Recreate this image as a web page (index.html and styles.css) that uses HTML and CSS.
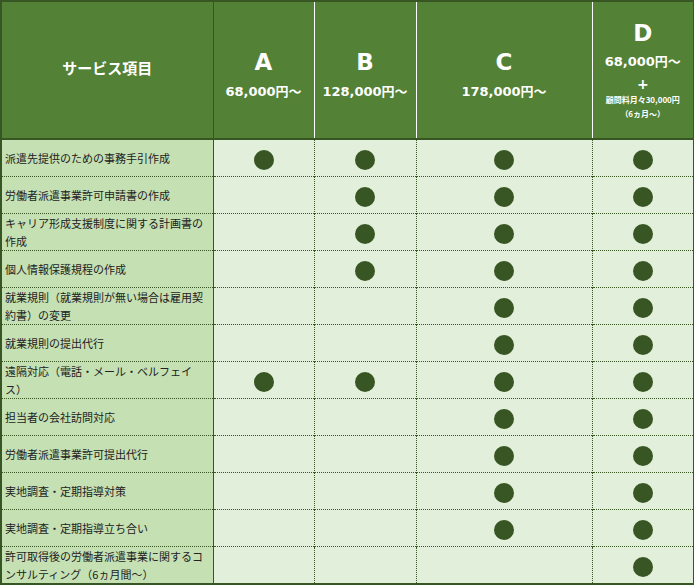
FILE: index.html
```html
<!DOCTYPE html>
<html lang="ja">
<head>
<meta charset="utf-8">
<title>サービス項目</title>
<link rel="stylesheet" href="styles.css">
</head>
<body>
<table class="grid">
  <colgroup>
    <col class="c-item"><col class="c-a"><col class="c-b"><col class="c-c"><col class="c-d">
  </colgroup>
  <thead>
    <tr>
      <th class="h-item"><span class="h-label">サービス項目</span></th>
      <th><div class="plan"><span class="letter">A</span><span class="price">68,000円～</span></div></th>
      <th><div class="plan"><span class="letter">B</span><span class="price">128,000円～</span></div></th>
      <th><div class="plan"><span class="letter">C</span><span class="price">178,000円～</span></div></th>
      <th><div class="plan plan-d"><span class="letter">D</span><span class="price">68,000円～</span><span class="plus">+</span><span class="small">顧問料月々30,000円</span><span class="small">（6ヵ月～）</span></div></th>
    </tr>
  </thead>
  <tbody>
    <tr><td class="item">派遣先提供のための事務手引作成</td><td><span class="dot"></span></td><td><span class="dot"></span></td><td><span class="dot"></span></td><td><span class="dot"></span></td></tr>
    <tr><td class="item">労働者派遣事業許可申請書の作成</td><td></td><td><span class="dot"></span></td><td><span class="dot"></span></td><td><span class="dot"></span></td></tr>
    <tr><td class="item">キャリア形成支援制度に関する計画書の作成</td><td></td><td><span class="dot"></span></td><td><span class="dot"></span></td><td><span class="dot"></span></td></tr>
    <tr><td class="item">個人情報保護規程の作成</td><td></td><td><span class="dot"></span></td><td><span class="dot"></span></td><td><span class="dot"></span></td></tr>
    <tr><td class="item">就業規則（就業規則が無い場合は雇用契約書）の変更</td><td></td><td></td><td><span class="dot"></span></td><td><span class="dot"></span></td></tr>
    <tr><td class="item">就業規則の提出代行</td><td></td><td></td><td><span class="dot"></span></td><td><span class="dot"></span></td></tr>
    <tr><td class="item">遠隔対応（電話・メール・ベルフェイス）</td><td><span class="dot"></span></td><td><span class="dot"></span></td><td><span class="dot"></span></td><td><span class="dot"></span></td></tr>
    <tr><td class="item">担当者の会社訪問対応</td><td></td><td></td><td><span class="dot"></span></td><td><span class="dot"></span></td></tr>
    <tr><td class="item">労働者派遣事業許可提出代行</td><td></td><td></td><td><span class="dot"></span></td><td><span class="dot"></span></td></tr>
    <tr><td class="item">実地調査・定期指導対策</td><td></td><td></td><td><span class="dot"></span></td><td><span class="dot"></span></td></tr>
    <tr><td class="item">実地調査・定期指導立ち合い</td><td></td><td></td><td><span class="dot"></span></td><td><span class="dot"></span></td></tr>
    <tr><td class="item">許可取得後の労働者派遣事業に関するコンサルティング（6ヵ月間～）</td><td></td><td></td><td></td><td><span class="dot"></span></td></tr>
  </tbody>
</table>
</body>
</html>
```

FILE: styles.css
```css
html, body {
  margin: 0;
  padding: 0;
  background: #ffffff;
}

.grid {
  border-collapse: collapse;
  table-layout: fixed;
  width: 693px;
  border: 2px solid #375623;
  font-family: "Noto Sans CJK JP", "Noto Sans", sans-serif;
}

.c-item { width: 212px; }
.c-a { width: 101px; }
.c-b { width: 102px; }
.c-c { width: 176px; }
.c-d { width: 102px; }

.grid thead tr {
  border-bottom: 2px solid #375623;
}

.grid th {
  background: #538135;
  color: #ffffff;
  height: 136px;
  padding: 0;
  border-left: 1px solid #ffffff;
  vertical-align: middle;
  text-align: center;
}

.grid th.h-item {
  border-left: none;
  border-right: 1px solid #375623;
  font-size: 15px;
  font-weight: 700;
}

.h-label {
  display: block;
  margin-bottom: 5px;
}

.plan {
  display: flex;
  flex-direction: column;
  align-items: center;
  padding-top: 9px;
}

.letter {
  font-family: "DejaVu Sans", sans-serif;
  font-weight: 700;
  font-size: 23px;
  line-height: 28px;
}

.price {
  font-family: "DejaVu Sans", "Noto Sans CJK JP", sans-serif;
  font-weight: 700;
  font-size: 13px;
  line-height: 18px;
  margin-top: 7px;
}

.plan-d {
  padding-top: 0;
}

.plan-d .price {
  margin-top: 6px;
}

.plus {
  font-family: "DejaVu Sans", sans-serif;
  font-size: 14px;
  line-height: 18px;
  margin-top: 4px;
}

.small {
  font-size: 8px;
  line-height: 14px;
  font-weight: 700;
}

.grid td {
  background: #e2efda;
  height: 36px;
  padding: 0;
  border-top: 1px dotted #375623;
  border-left: 1px dotted #375623;
  text-align: center;
  vertical-align: middle;
}

.grid td.item {
  background: #c5e0b3;
  border-left: none;
  border-right: 1px solid #375623;
  text-align: left;
  padding: 0 6px 0 3px;
  font-size: 11px;
  line-height: 18px;
  color: #222222;
}

.dot {
  display: inline-block;
  width: 20px;
  height: 20px;
  border-radius: 50%;
  background: #375623;
  vertical-align: middle;
}
```
